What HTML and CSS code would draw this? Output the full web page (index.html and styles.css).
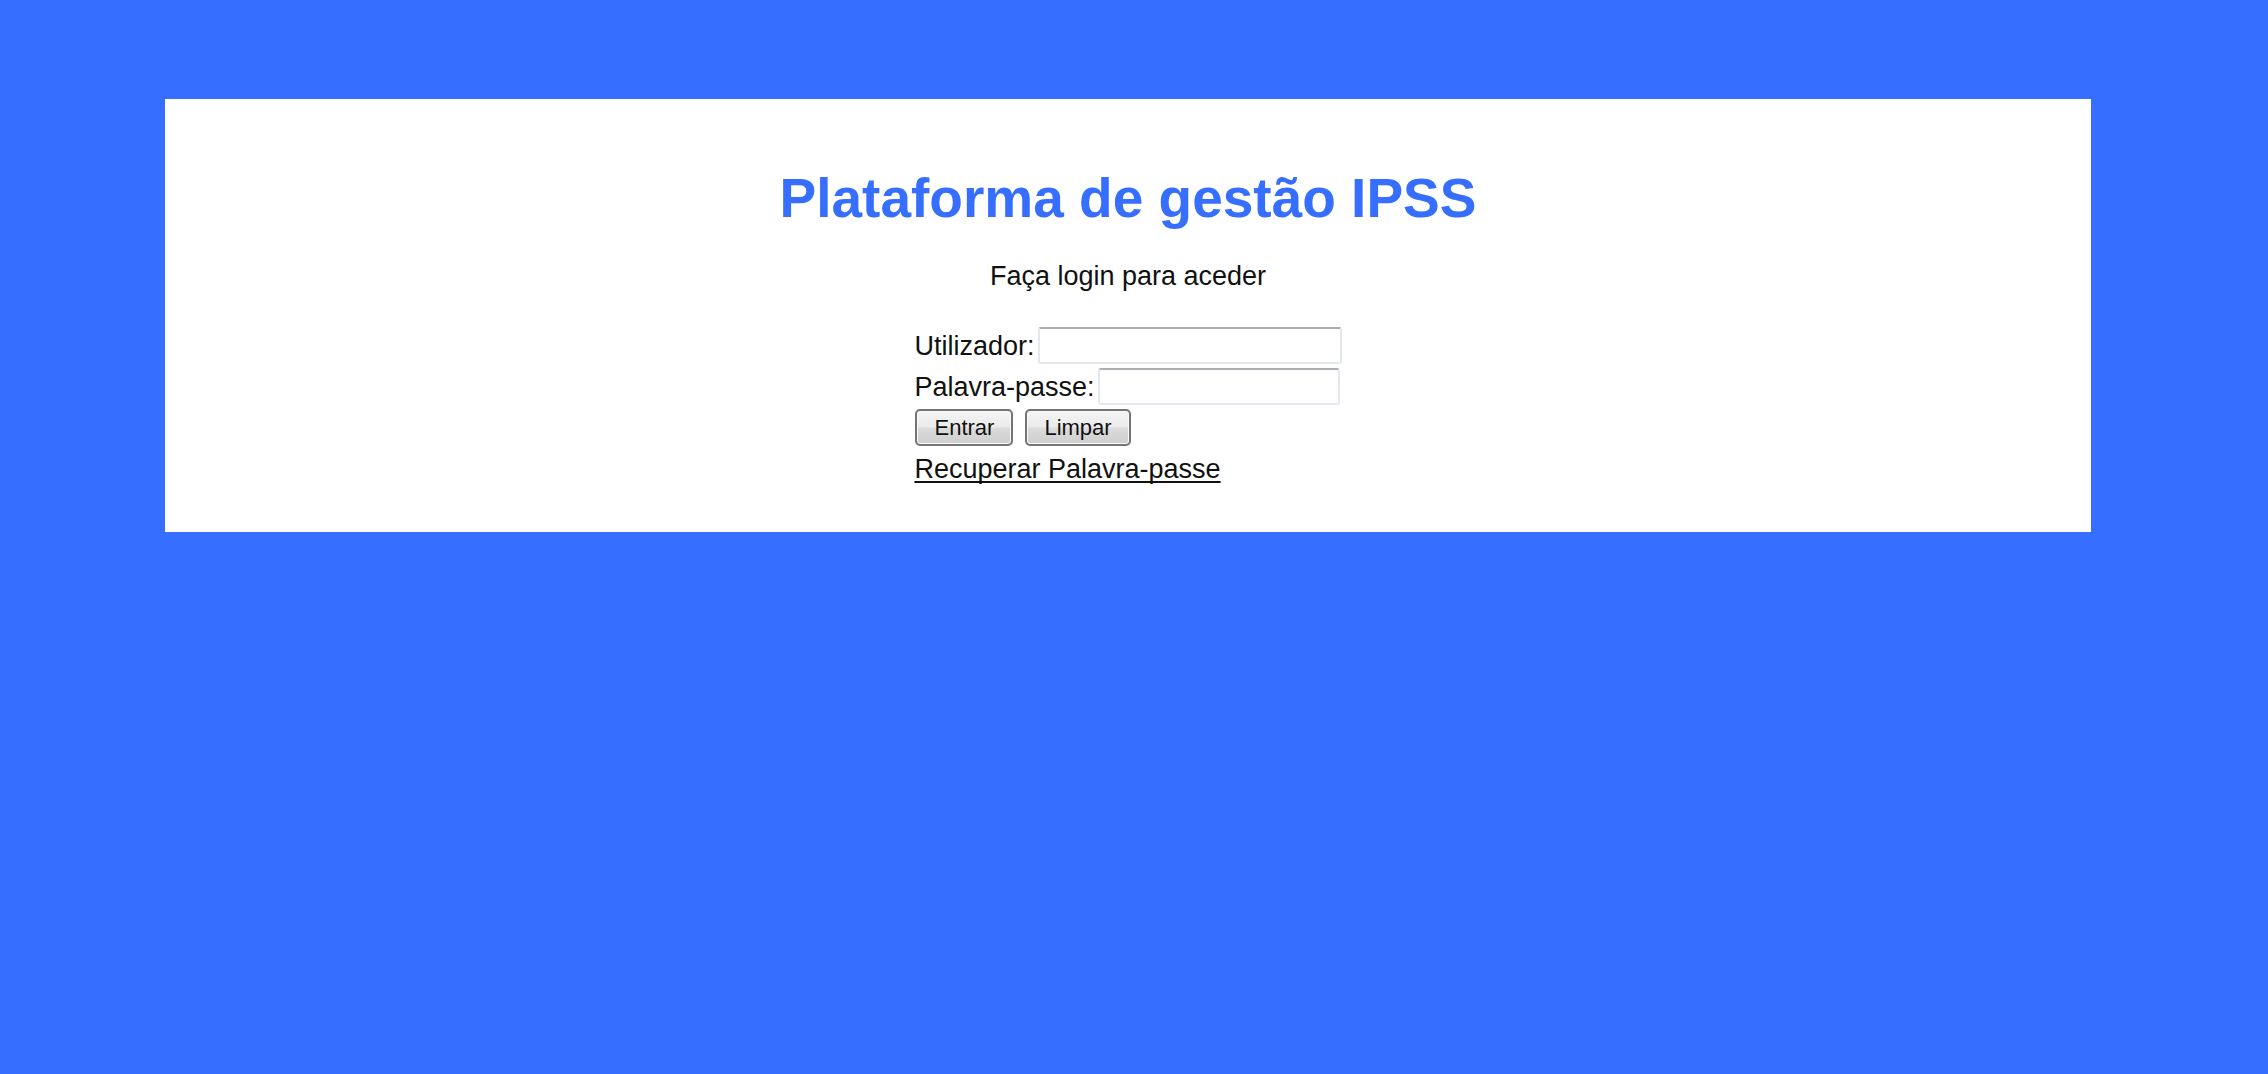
FILE: index.html
```html
<!DOCTYPE html>
<html lang="pt">
<head>
<meta charset="utf-8">
<meta name="viewport" content="width=device-width, initial-scale=1">
<title>Plataforma de gestão IPSS</title>
<link rel="stylesheet" href="styles.css">
</head>
<body>
<main class="card">
  <h1 class="title">Plataforma de gestão IPSS</h1>
  <p class="intro">Faça login para aceder</p>
  <form class="login">
    <div class="row">
      <label for="user">Utilizador:</label>
      <input class="field field-user" id="user" name="user" type="text">
    </div>
    <div class="row">
      <label for="password">Palavra-passe:</label>
      <input class="field field-password" id="password" name="password" type="password">
    </div>
    <div class="row actions">
      <button class="button" type="submit">Entrar</button>
      <button class="button" type="reset">Limpar</button>
    </div>
    <div class="row">
      <a class="recover" href="#">Recuperar Palavra-passe</a>
    </div>
  </form>
</main>
</body>
</html>
```
FILE: styles.css
```css
* {
  box-sizing: border-box;
}

body {
  margin: 0;
  padding: 99px 12px 0 0;
  background: #366eff;
  color: #111;
  font-family: "Liberation Sans", Arial, sans-serif;
  font-size: 27px;
  line-height: 32px;
}

.card {
  display: flex;
  flex-direction: column;
  align-items: center;
  margin: 0 165px;
  padding: 67px 16px 45px;
  background: #fff;
}

.title {
  margin: 0 0 30px;
  color: #366eff;
  font-size: 55px;
  line-height: 64px;
  text-align: center;
}

.intro {
  margin: 0 0 35px;
}

.login {
  display: flex;
  flex-direction: column;
  gap: 4px;
}

.row {
  display: flex;
  align-items: center;
  gap: 3px;
  height: 37px;
}

.field {
  height: 37px;
  padding: 2px 6px;
  border: 2px solid #e3e7f0;
  border-top-color: #abadb3;
  border-radius: 3px;
  background: #fff;
  font: inherit;
}

.field-user {
  width: 304px;
}

.field-password {
  width: 242px;
}

.actions {
  gap: 12px;
  padding-left: 1px;
}

.button {
  height: 37px;
  padding: 0 17px;
  border: 2px solid #757575;
  border-radius: 5px;
  background: linear-gradient(#f3f3f3 0%, #ebebeb 49%, #dcdcdc 51%, #cecece 100%);
  box-shadow: inset 0 0 0 1px #f8f8f8;
  color: #111;
  font-family: inherit;
  font-size: 22px;
  line-height: 28px;
}

.recover {
  color: inherit;
  text-decoration-thickness: 2px;
  text-underline-offset: 3px;
  text-decoration-skip-ink: none;
}
```
